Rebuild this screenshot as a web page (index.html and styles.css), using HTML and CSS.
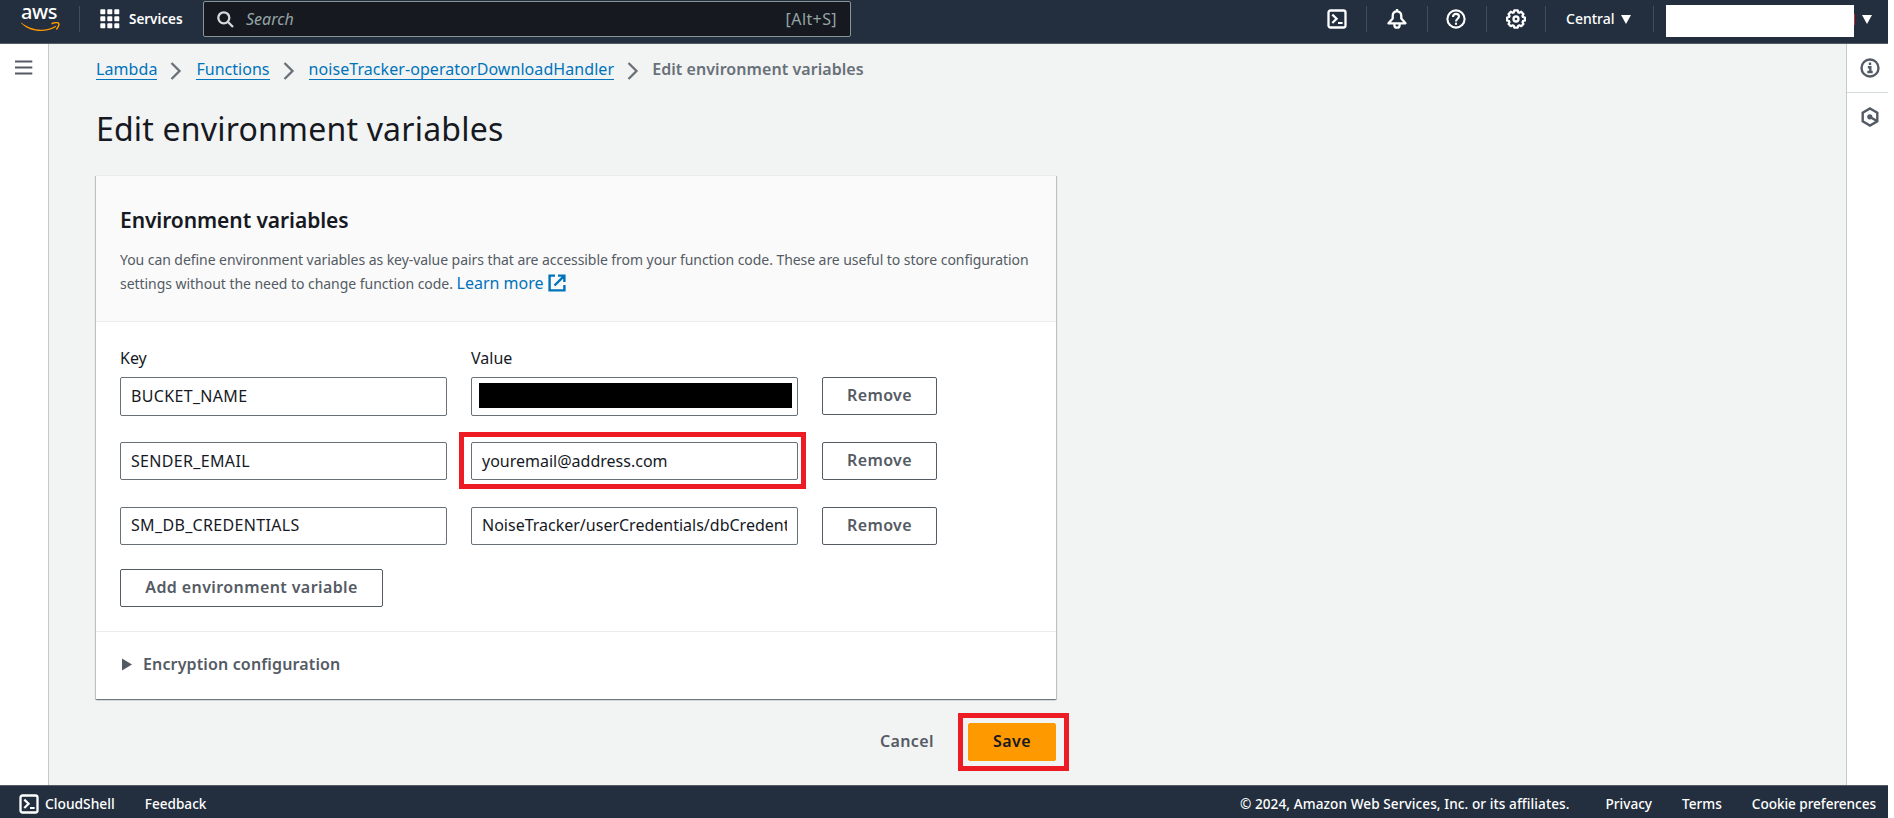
FILE: index.html
```html
<!DOCTYPE html>
<html lang="en">
<head>
<meta charset="utf-8">
<title>Edit environment variables - Lambda</title>
<link rel="stylesheet" href="styles.css">
</head>
<body>
<svg width="0" height="0" class="defs" aria-hidden="true">
  <symbol id="shell" viewBox="0 0 20 20"><rect x="1.5" y="1.5" width="17" height="17" rx="2" fill="none" stroke="currentColor" stroke-width="2.3"/><path d="M5.3 5.6l4.3 4.2-4.3 4.2M11 14h4.600" fill="none" stroke="currentColor" stroke-width="2.2"/></symbol>
  <symbol id="chev" viewBox="0 0 12 18"><path d="M1.5 1l8 8-8 8" fill="none" stroke="currentColor" stroke-width="2.3"/></symbol>
</svg>
<div class="app">
  <header class="top">
    <a class="logo"><span class="logo-text">aws</span>
      <svg class="smile" width="40" height="10" viewBox="0 0 40 10"><path d="M.3.600C10 9 25 9.800 34.600 3.700l.6 1C25 11.300 9 10.600.1 1.200z" fill="#f90"/><path d="M30.500 1.700c3-1 6.500-1.200 7.200-.300.600 1-.500 4.200-2.400 6" fill="none" stroke="#f90" stroke-width="1.500"/></svg>
    </a>
    <i class="sep"></i>
    <a class="services">
      <svg width="20" height="20" viewBox="0 0 20 20" fill="#fff"><rect x=".3" y=".3" width="5" height="5" rx=".8"/><rect x="7.300" y=".3" width="5" height="5" rx=".8"/><rect x="14.300" y=".3" width="5" height="5" rx=".8"/><rect x=".3" y="7.300" width="5" height="5" rx=".8"/><rect x="7.300" y="7.300" width="5" height="5" rx=".8"/><rect x="14.300" y="7.300" width="5" height="5" rx=".8"/><rect x=".3" y="14.300" width="5" height="5" rx=".8"/><rect x="7.300" y="14.300" width="5" height="5" rx=".8"/><rect x="14.300" y="14.300" width="5" height="5" rx=".8"/></svg>
      <span>Services</span>
    </a>
    <div class="search">
      <svg width="17" height="17" viewBox="0 0 17 17" fill="none" stroke="#d5dbdb" stroke-width="2.300"><circle cx="6.800" cy="6.800" r="5.500"/><path d="M10.800 10.800l5.200 5.200"/></svg>
      <span class="placeholder">Search</span><span class="hint">[Alt+S]</span>
    </div>
    <div class="tools">
      <span class="tool t1"><svg width="20" height="20"><use href="#shell"/></svg></span>
      <span class="tool t2"><svg width="20" height="20" viewBox="0 0 20 20" fill="none" stroke="#fff" stroke-width="2.300" stroke-linejoin="round"><path d="M10 0v2.500M10 2.300c-3 0-4.300 2.200-4.300 4.700v2.500L1.500 14.300h17L14.300 9.500V7c0-2.500-1.300-4.700-4.300-4.700z"/><path d="M7.400 14.500v1.700c0 1.500 1.100 2.500 2.600 2.500s2.600-1 2.600-2.500v-1.700"/></svg></span>
      <span class="tool t3"><svg width="20" height="20" viewBox="0 0 20 20" fill="none" stroke="#fff" stroke-width="2.100"><circle cx="10" cy="10" r="8.600"/><path d="M7 8c0-2 1.200-3.100 3-3.100s3 1.100 3 2.700c0 2.100-3 2.300-3 4.800"/><path d="M10 13.700v2.100"/></svg></span>
      <span class="tool t4"><svg width="20" height="20" viewBox="0 0 20 20" fill="none" stroke="#fff" stroke-width="2.300" stroke-linejoin="round"><path d="M8.300 1.400h3.400l.6 2 1 .4 1.900-1 2.200 2.300-.9 1.900.4 1 2 .5v3l-2 .6-.4 1 .9 1.900-2.200 2.200-1.900-.9-1 .4-.6 1.900H8.300l-.6-1.900-1-.4-1.900.9L2.600 15l.9-1.900-.4-1-2-.6v-3l2-.5.4-1-.9-1.900 2.200-2.300 1.900 1 1-.4z"/><circle cx="10" cy="10" r="2.500"/></svg></span>
      <span class="region">Central<i class="caret"></i></span>
    </div>
    <div class="account"><i class="mask"></i><i class="edge"></i><i class="caret"></i></div>
  </header>

  <div class="body">
    <nav class="rail left"><svg width="18" height="16" viewBox="0 0 18 16" stroke="#545b64" stroke-width="2"><path d="M0 1.500h17.300M0 7.500h17.300M0 13.500h17.300"/></svg></nav>
    <main class="main">
      <div class="crumbs">
        <a>Lambda</a><svg width="12" height="18"><use href="#chev"/></svg>
        <a class="fn">Functions</a><svg width="12" height="18"><use href="#chev"/></svg>
        <a class="handler">noiseTracker-operatorDownloadHandler</a><svg width="12" height="18"><use href="#chev"/></svg>
        <b>Edit environment variables</b>
      </div>
      <h1>Edit environment variables</h1>
      <section class="card">
        <div class="card-head">
          <h2>Environment variables</h2>
          <p>You can define environment variables as key-value pairs that are accessible from your function code. These are useful to store configuration<br><span class="line2">settings without the need to change function code.</span> <a>Learn more<svg width="18" height="18" viewBox="0 0 18 18" fill="none" stroke="#0073bb" stroke-width="2.400"><path d="M7 1.600H1.600v14.800h14.800V11"/><path d="M10 1.600h6.400V8M16.200 1.800L6.500 11.500"/></svg></a></p>
        </div>
        <div class="vars">
          <label>Key</label><label>Value</label><span></span>
          <div class="field caps first">BUCKET_NAME</div><div class="field first redacted"><i></i></div><button class="btn">Remove</button>
          <div class="field caps">SENDER_EMAIL</div><div class="marked"><div class="field">youremail@address.com</div></div><button class="btn">Remove</button>
          <div class="field caps up">SM_DB_CREDENTIALS</div><div class="field up"><span class="clip">NoiseTracker/userCredentials/dbCredent</span></div><button class="btn">Remove</button>
        </div>
        <button class="btn add">Add environment variable</button>
        <div class="expand"><svg width="10" height="13" viewBox="0 0 10 13"><path d="M0 .5v12l10-6z" fill="#545b64"/></svg>Encryption configuration</div>
      </section>
      <div class="actions"><a class="cancel">Cancel</a><div class="marked save-mark"><button class="btn save">Save</button></div></div>
    </main>
    <aside class="rail right">
      <span><svg width="20" height="20" viewBox="0 0 20 20" fill="none" stroke="#545b64" stroke-width="2.400"><circle cx="10" cy="10" r="8.500"/><path d="M10 4.600v2.500M7.800 9.200h2.500v4.600M7.300 14h5.400"/></svg></span>
      <span><svg width="20" height="20" viewBox="0 0 20 20" fill="none" stroke="#545b64" stroke-width="2.400"><path d="M10 1.500l7.300 4.200v8.600L10 18.500l-7.300-4.200V5.700z"/><circle cx="9.800" cy="9.800" r="2.600" fill="#545b64" stroke="none"/><path d="M10 10l7 4"/></svg></span>
    </aside>
  </div>

  <footer class="foot">
    <svg width="20" height="20"><use href="#shell"/></svg>
    <span class="shell">CloudShell</span><span class="feedback">Feedback</span>
    <span class="legal">© 2024, Amazon Web Services, Inc. or its affiliates.</span>
    <span class="privacy">Privacy</span><span class="terms">Terms</span><span class="cookie">Cookie preferences</span>
  </footer>
</div>
</body>
</html>
```
FILE: styles.css
```css
* { box-sizing: border-box; }
body { margin: 0; background: #fff; color: #16191f; font: 16px/22px "Noto Sans", "Open Sans", sans-serif; overflow: hidden; }
svg { display: block; flex: none; }
.defs { position: absolute; }
.app { width: 1888px; height: 818px; display: flex; flex-direction: column; }

.top { height: 44px; background: #232f3e; border-bottom: 1px solid #545b64; display: flex; align-items: flex-start; color: #fff; font-size: 14px; font-weight: 500; }
.logo { width: 79px; height: 38px; padding-left: 21px; display: flex; flex-direction: column; }
.logo-text { font-size: 20px; line-height: 22px; height: 22px; padding-top: 1px; letter-spacing: -.4px; }
.sep { width: 1px; height: 26px; margin-top: 6px; background: #414d5c; }
.services { display: flex; align-items: center; gap: 9px; height: 38px; width: 123px; padding-left: 20px; letter-spacing: -.02px; font-weight: 600; font-size: 13.5px; }
.search { width: 648px; height: 36px; margin-top: 1px; border: 1px solid #879596; border-radius: 2px; background: #16191f; display: flex; align-items: center; padding: 0 12px 0 13px; color: #95a5a6; font-size: 16px; font-weight: 400; }
.placeholder { font-style: italic; margin-left: 12px; flex: 1; }
.hint { letter-spacing: .4px; margin-right: 1px; }
.tools { margin-left: auto; display: flex; align-items: center; height: 38px; }
.tool { display: flex; align-items: center; height: 26px; border-right: 1px solid #414d5c; }
.t1 { width: 40px; }
.t2 { width: 61px; padding-left: 20px; }
.t3 { width: 59px; padding-left: 18px; }
.t4 { width: 59px; padding-left: 19px; }
.region { width: 108px; padding-left: 20px; height: 26px; border-right: 1px solid #414d5c; display: flex; align-items: center; }
.region .caret { margin-left: 6px; }
.caret { border: 5px solid transparent; border-top: 9px solid #fff; border-bottom: 0; }
.account { width: 234px; padding-left: 12px; height: 38px; display: flex; align-items: center; }
.mask { width: 188px; height: 32px; background: #fff; margin-top: 4px; }
.edge { width: 1px; height: 11px; background: #b5333b; margin-right: 7px; }

.body { flex: 1; display: flex; min-height: 0; }
.rail { background: #fff; }
.left { width: 49px; border-right: 1px solid #c3cacc; padding: 16px 0 0 15px; }
.right { width: 42px; border-left: 1px solid #c3cacc; }
.right span { display: flex; height: 49px; align-items: center; padding: 0 0 1px 13px; border-bottom: 1px solid #d5dbdb; }
.right span + span { border: 0; padding-bottom: 2px; }
.main { flex: 1; background: #f2f3f3; padding: 14px 0 0 47px; }

.crumbs { display: flex; align-items: center; height: 22px; color: #687078; }
.crumbs a { color: #0073bb; border-bottom: 1px solid #0073bb; height: 22px; line-height: 22px; letter-spacing: .08px; }
.crumbs svg { margin: 3px 14px 0 13px; }
.crumbs .fn { letter-spacing: .02px; }
.crumbs .handler { letter-spacing: .07px; }
.crumbs b { font-weight: 600; letter-spacing: .06px; margin-left: -1px; }
h1 { margin: 29px 0 26px; font-size: 32px; line-height: 40px; font-weight: 400; letter-spacing: .2px; }

.card { width: 960px; height: 524px; background: #fff; border-top: 1px solid #eaeded; box-shadow: 0 1px 1px 0 rgba(0,28,36,.35), 1px 1px 1px 0 rgba(0,28,36,.18), -1px 1px 1px 0 rgba(0,28,36,.18); }
.card-head { height: 146px; padding: 30px 24px 0; background: #fafafa; border-bottom: 1px solid #eaeded; }
h2 { margin: 0 0 14px; font-size: 21px; line-height: 28px; font-weight: 600; letter-spacing: -.08px; }
p { margin: 0; font-size: 14px; line-height: 24px; color: #545b64; letter-spacing: -.06px; white-space: nowrap; }
.line2 { letter-spacing: -.04px; }
p a { color: #0073bb; font-size: 16px; line-height: 20px; letter-spacing: 0; }
p svg { display: inline-block; vertical-align: -3px; margin-left: 4px; }

.vars { display: grid; grid-template-columns: 327px 327px 115px; column-gap: 24px; grid-template-rows: 3px 38px 38px 38px; row-gap: 27px; padding: 25px 24px 0; }
.vars label { margin-bottom: -27px; line-height: 22px; }
.field { height: 38px; border: 1px solid #687078; border-radius: 2px; padding: 0 10px; line-height: 37px; background: #fff; white-space: nowrap; }
.field.first { height: 39px; }
.field.up { line-height: 35px; }
.caps { letter-spacing: .33px; }
.clip { display: block; overflow: hidden; }
.redacted { padding: 5px 5px 7px 7px; }
.redacted i { display: block; height: 25px; background: #000; }
.marked { position: relative; }
.marked::after { content: ""; position: absolute; inset: -10px -8px -9px -12px; border: 5px solid #ed1c24; }
.btn { height: 38px; font: 600 16px/34px "Noto Sans", "Open Sans", sans-serif; letter-spacing: .4px; color: #545b64; background: #fff; border: 1px solid #545b64; border-radius: 2px; padding: 0 0 2px; display: block; }
.add { width: 263px; margin: 24px 0 24px 24px; }
.expand { height: 67px; border-top: 1px solid #eaeded; padding: 0 0 3px 26px; display: flex; align-items: center; gap: 11px; color: #545b64; font-weight: 600; letter-spacing: .14px; }
.expand svg { margin-top: 2px; }

.actions { width: 960px; display: flex; justify-content: flex-end; align-items: center; margin-top: 24px; font-weight: 600; }
.cancel { color: #545b64; letter-spacing: .4px; padding-bottom: 2px; margin-right: 34px; }
.save { width: 88px; background: #f90; border-color: #f90; color: #16191f; }
.save-mark::after { inset: -10px -13px -10px -10px; }

.foot { height: 33px; background: #232f3e; border-top: 1px solid #545b64; color: #fff; display: flex; align-items: center; padding: 3px 12px 0 19px; font-size: 13.6px; font-weight: 500; }
.shell { margin-left: 6px; font-size: 13.8px; }
.feedback { margin-left: 30px; }
.legal { margin-left: auto; letter-spacing: .08px; }
.privacy { margin-left: 36px; }
.terms { margin-left: 30px; }
.cookie { margin-left: 30px; letter-spacing: -.05px; }
```
